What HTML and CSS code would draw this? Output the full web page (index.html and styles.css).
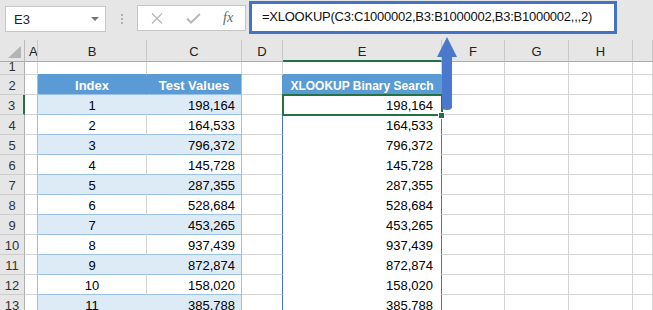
FILE: index.html
```html
<!DOCTYPE html>
<html lang="en">
<head>
    <meta charset="UTF-8">
    <title>XLOOKUP Binary Search</title>
    <link rel="stylesheet" href="styles.css">
</head>
<body>

    <div class="toolbar">
        <div class="namebox"><span>E3</span><span class="caret"></span></div>
        <div class="grip"><i></i><i></i><i></i></div>
        <div class="fxbox">
            <svg class="ico" width="12" height="11" viewBox="0 0 12 11"><path d="M1 0.5L11 10.5M11 0.5L1 10.5" stroke="#b9b9b9" stroke-width="1.3" fill="none"/></svg>
            <svg class="ico" width="15" height="11" viewBox="0 0 15 11"><path d="M1 5.5L5 9.5L14 1" stroke="#b9b9b9" stroke-width="2" fill="none"/></svg>
            <span class="fx">fx</span>
        </div>
        <div class="formula">=XLOOKUP(C3:C1000002,B3:B1000002,B3:B1000002,,,2)</div>
    </div>

    <div class="sheet" id="sheet"></div>

    <svg class="arrow" width="22" height="76" viewBox="0 0 22 76">
        <path d="M11 1L21 21H16V71Q16 74 11 74Q6 74 6 71V21H1Z" fill="#4a78cc"/>
    </svg>

    <script>
        const values = ["198,164", "164,533", "796,372", "145,728", "287,355", "528,684",
            "453,265", "937,439", "872,874", "158,020", "385,788"];
        const cols = ["A", "B", "C", "D", "E", "F", "G", "H", ""];
        const sheet = document.getElementById("sheet");

        function cell(cls, text) {
            const div = document.createElement("div");
            div.className = "cell " + cls;
            if (text) div.textContent = text;
            sheet.appendChild(div);
        }

        // column headers
        cell("corner");
        cols.forEach(c => cell("ch" + (c === "E" ? " ch-sel" : ""), c));

        // row 1 (partly hidden under the headers)
        cell("rh r1", "1");
        cell("");
        cell("top-t");
        cell("top-t");
        cell("");
        cell("top-t");
        cell(""); cell(""); cell(""); cell("");

        // row 2: table headers
        cell("rh", "2");
        cell("edge");
        cell("th tb-b", "Index");
        cell("th tb-c", "Test Values");
        cell("col-d");
        cell("th th-e", "XLOOKUP Binary Search");
        cell(""); cell(""); cell(""); cell("");

        values.forEach((v, i) => {
            const band = i % 2 === 0 ? " band" : "";
            cell("rh" + (i === 0 ? " rh-sel" : ""), String(i + 3));
            cell("edge");
            cell("num-b tb-b" + band, String(i + 1));
            cell("num-c tb-c" + band, v);
            cell("col-d res-d");
            cell("num-e" + (i === 0 ? " cur" : ""), v);
            cell(""); cell(""); cell(""); cell("");
        });
    </script>
</body>
</html>
```

FILE: styles.css
```css
body {
    margin: 0;
    width: 653px;
    height: 310px;
    overflow: hidden;
    background: white;
    font-family: "Liberation Sans", Arial, sans-serif;
    position: relative;
}
.toolbar {
    height: 40px;
    background: #e6e6e6;
    display: flex;
    align-items: flex-start;
}
.namebox {
    box-sizing: border-box;
    margin: 6px 0 0 5px;
    width: 101px;
    height: 26px;
    background: white;
    border: 1px solid #c6c6c6;
    display: flex;
    align-items: center;
    justify-content: space-between;
    padding: 0 6px 0 8px;
    font-size: 13px;
    color: #222;
}
.caret {
    border-left: 4px solid transparent;
    border-right: 4px solid transparent;
    border-top: 4px solid #777;
}
.grip {
    margin: 14px 0 0 15px;
    display: flex;
    flex-direction: column;
    gap: 2px;
}
.grip i {
    display: block;
    width: 2px;
    height: 2px;
    background: #b0b0b0;
}
.fxbox {
    box-sizing: border-box;
    margin: 5px 0 0 14px;
    width: 109px;
    height: 26px;
    background: white;
    border: 1px solid #c6c6c6;
    display: flex;
    align-items: center;
    padding-left: 13px;
    gap: 23px;
}
.fx {
    font-family: "Liberation Serif", serif;
    font-style: italic;
    font-size: 14px;
    color: #666;
    margin-left: -1px;
}
.formula {
    box-sizing: border-box;
    margin: 1px 0 0 3px;
    width: 368px;
    height: 33px;
    background: white;
    border: 3px solid #4472c4;
    padding-left: 10px;
    font-size: 13px;
    letter-spacing: -0.25px;
    line-height: 26px;
    color: #111;
    white-space: nowrap;
}
.sheet {
    display: grid;
    grid-template-columns: 25px 13px 109px 95px 41px 159px 63px 64px 64px 20px;
    grid-template-rows: 22px 13px;
    grid-auto-rows: 20px;
}
.cell {
    box-sizing: border-box;
    border-right: 1px solid #d4d4d4;
    border-bottom: 1px solid #d4d4d4;
    font-size: 13px;
    line-height: 16px;
    padding: 3px 4px 0;
    white-space: nowrap;
    overflow: hidden;
    color: #000;
}
.corner {
    background: #e6e6e6;
    border-right-color: #bcbcbc;
    border-bottom-color: #ababab;
    position: relative;
}
.corner::after {
    content: "";
    position: absolute;
    right: 3px;
    bottom: 3px;
    border-left: 13px solid transparent;
    border-bottom: 12px solid #b4b4b4;
}
.ch {
    background: #e6e6e6;
    text-align: center;
    border-right-color: #c8c8c8;
    border-bottom-color: #ababab;
    line-height: 18px;
    color: #222;
}
.ch-sel {
    border-bottom: 2px solid #217346;
}
.rh {
    background: #e6e6e6;
    text-align: center;
    border-right-color: #b0b0b0;
    border-bottom-color: #cdcdcd;
    color: #333;
    padding: 3px 0 0;
}
.rh.r1 {
    padding: 0;
    line-height: 9px;
}
.rh-sel {
    border-right: 2px solid #217346;
}
.top-t {
    border-bottom-color: #5b9bd5;
}
.edge {
    border-right-color: #9bc2e6;
}
.th {
    background: #5b9bd5;
    color: white;
    font-weight: bold;
    text-align: center;
    border-right-color: #5b9bd5;
    border-bottom-color: #9bc2e6;
}
.th.tb-c {
    border-right-color: #9bc2e6;
}
.th-e {
    font-size: 12px;
    border-bottom-color: #5b9bd5;
}
.col-d {
    border-right-color: #5b9bd5;
}
.res-d {
    border-right-color: #4472c4;
}
.num-b {
    text-align: center;
}
.num-c {
    text-align: right;
    padding-right: 6px;
}
.tb-b,
.tb-c {
    border-bottom-color: #9bc2e6;
}
.tb-c {
    border-right-color: #9bc2e6;
}
.band {
    background: #ddebf7;
}
.tb-b.band {
    border-right-color: #ddebf7;
}
.num-e {
    text-align: right;
    padding-right: 8px;
    border-right-color: #4472c4;
    border-bottom-color: white;
}
.cur {
    position: relative;
    overflow: visible;
}
.cur::before {
    content: "";
    position: absolute;
    left: -1px;
    top: -1px;
    right: -2px;
    bottom: -2px;
    border: 2px solid #217346;
}
.cur::after {
    content: "";
    position: absolute;
    right: -4px;
    bottom: -5px;
    width: 5px;
    height: 5px;
    background: #217346;
    border: 1px solid white;
}
.arrow {
    position: absolute;
    left: 436px;
    top: 36px;
}
```
